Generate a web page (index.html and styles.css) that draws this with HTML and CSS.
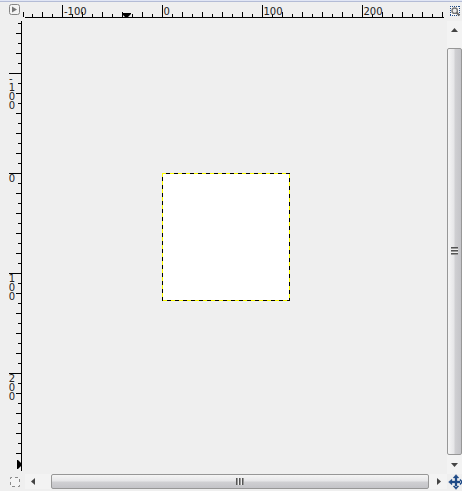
FILE: index.html
```
<!DOCTYPE html>
<html lang="en">
<head>
  <meta charset="UTF-8" />
  <title>Image window</title>
  <link rel="stylesheet" href="styles.css">
</head>
<body>
  <div class="window">
    <button class="corner menu-button" aria-label="Menu">
      <svg width="22" height="19" viewBox="0 2 22 19">
        <rect x="9.5" y="4.5" width="10" height="10" rx="2" fill="#f4f4f4" stroke="#858585"/>
        <path d="M12 6.5v6l5-3z" fill="#777"/>
      </svg>
    </button>

    <svg class="ruler-top" width="425" height="19" viewBox="22 2 425 19">
      <defs>
        <pattern id="ticks-x" patternUnits="userSpaceOnUse" x="62" y="0" width="100" height="20">
          <path d="M0 5h1v12H0zM10 14h1v3h-1zM20 12h1v5h-1zM30 14h1v3h-1zM40 12h1v5h-1zM50 14h1v3h-1zM60 12h1v5h-1zM70 14h1v3h-1zM80 12h1v5h-1zM90 14h1v3h-1z"/>
        </pattern>
      </defs>
      <rect x="25" y="0" width="419" height="17" fill="url(#ticks-x)"/>
      <path d="M23 12h1v5h-1zM25 17h419v1H25z"/>
      <text x="64" y="15">-100</text>
      <text x="163.5" y="15">0</text>
      <text x="263.5" y="15">100</text>
      <text x="363.5" y="15">200</text>
      <path d="M122 13h9v1l-4 4h-1l-4-4z"/>
    </svg>

    <div class="corner">
      <svg width="15" height="19" viewBox="447 2 15 19">
        <rect x="450.5" y="6.5" width="9" height="9" fill="#fafafa"/>
        <path d="M450 6.500h10M450 15.500h10M450.500 6v10M459.500 6v10" fill="none" stroke="#204a87" stroke-dasharray="1 1"/>
        <circle cx="454.7" cy="10.7" r="2.7" fill="#eee" stroke="#777" stroke-width="1.4"/>
        <path d="M456.5 12.5l3 3" stroke="#666" stroke-width="2"/>
      </svg>
    </div>

    <svg class="ruler-left" width="22" height="453" viewBox="0 21 22 453">
      <defs>
        <pattern id="ticks-y" patternUnits="userSpaceOnUse" x="0" y="73" width="22" height="100">
          <path d="M9 0h12v1H9zM18 10h3v1h-3zM16 20h5v1h-5zM18 30h3v1h-3zM16 40h5v1h-5zM18 50h3v1h-3zM16 60h5v1h-5zM18 70h3v1h-3zM16 80h5v1h-5zM18 90h3v1h-3z"/>
        </pattern>
      </defs>
      <rect x="0" y="21" width="21" height="450" fill="url(#ticks-y)"/>
      <path d="M21 21h1v450h-1z"/>
      <text x="9" y="82">-</text>
      <text x="8.8" y="91">1</text>
      <text x="8.8" y="100">0</text>
      <text x="8.8" y="109">0</text>
      <text x="8.8" y="182">0</text>
      <text x="8.8" y="282">1</text>
      <text x="8.8" y="291">0</text>
      <text x="8.8" y="300">0</text>
      <text x="8.8" y="382">2</text>
      <text x="8.8" y="391">0</text>
      <text x="8.8" y="400">0</text>
      <path d="M17 460h1l4 4v1l-4 4h-1z"/>
    </svg>

    <main class="canvas">
      <div class="layer"></div>
    </main>

    <div class="scrollbar vertical">
      <svg width="15" height="27" viewBox="0 0 15 27"><path d="M4 11l3.5-4L11 11z" fill="#444"/></svg>
      <div class="thumb"><span class="grip"></span></div>
      <svg width="15" height="18" viewBox="0 0 15 18"><path d="M4 8l3.5 4L11 8z" fill="#444"/></svg>
    </div>

    <div class="corner">
      <svg width="22" height="17" viewBox="0 474 22 17">
        <rect x="10.5" y="477.5" width="9" height="9" fill="#f4f4f4" stroke="#8a8a8a" stroke-dasharray="3 3" stroke-dashoffset="1.5"/>
      </svg>
    </div>

    <div class="scrollbar horizontal">
      <svg width="26" height="15" viewBox="0 0 26 15"><path d="M10 4L6 7.5l4 3.5z" fill="#444"/></svg>
      <div class="thumb"><span class="grip"></span></div>
      <svg width="17" height="15" viewBox="0 0 17 15"><path d="M8 4l4 3.5L8 11z" fill="#444"/></svg>
    </div>

    <div class="corner">
      <svg width="15" height="17" viewBox="447 474 15 17">
        <path d="M455 477h2v10h-2zM451 481h10v2h-10zM456 474.500l3 3.500h-6zM456 489.500l3-3.500h-6zM448.500 482l3.500-3v6zM463.500 482l-3.500-3v6z" fill="#204a87" stroke="#204a87" stroke-width=".3"/>
      </svg>
    </div>
  </div>
</body>
</html>
```
FILE: styles.css
```
body {
  margin: 0;
  background-color: #efefef;
  overflow: hidden;
}
svg {
  display: block;
}
text {
  font-family: "DejaVu Sans", sans-serif;
  font-size: 10px;
  fill: #222;
}
.window {
  box-sizing: border-box;
  width: 462px;
  height: 491px;
  display: grid;
  grid-template-columns: 22px 425px 15px;
  grid-template-rows: 19px 453px 17px;
  border-top: 1px solid #e1e6f5;
  box-shadow: inset 0 1px #b4bcd6;
  padding-top: 1px;
}
.menu-button {
  padding: 0;
  border: 0;
  background: none;
}
.canvas {
  display: flex;
  padding: 152px 0 0 140px;
}
/* marching selection outline, one dashed strip per edge */
.layer {
  width: 128px;
  height: 128px;
  background:
    repeating-linear-gradient(90deg, #ff0 0 4px, #000 4px 8px) 0 0 / 128px 1px no-repeat,
    repeating-linear-gradient(90deg, #000 0 1px, #ff0 1px 5px, #000 5px 8px) 0 127px / 128px 1px no-repeat,
    repeating-linear-gradient(180deg, #ff0 0 4px, #000 4px 8px) 0 0 / 1px 128px no-repeat,
    repeating-linear-gradient(180deg, #000 0 1px, #ff0 1px 5px, #000 5px 8px) 127px 0 / 1px 128px no-repeat,
    #fff;
}
.scrollbar {
  display: flex;
  background-color: #f3f3f3;
}
.vertical {
  flex-direction: column;
}
.horizontal {
  height: 15px;
  margin-left: 3px;
}
.thumb {
  box-sizing: border-box;
  display: flex;
  align-items: center;
  justify-content: center;
  border: 1px solid #979797;
  border-radius: 2px;
}
.vertical .thumb {
  height: 407px;
  background: linear-gradient(90deg, #f5f5f5, #e6e6e8 45%, #cfcfd2 55%, #c4c4c8);
}
.horizontal .thumb {
  width: 378px;
  background: linear-gradient(180deg, #f5f5f5, #e6e6e8 45%, #cfcfd2 55%, #c4c4c8);
}
.vertical .grip {
  width: 7px;
  height: 8px;
  margin-bottom: 2px;
  background: repeating-linear-gradient(180deg, #555 0 1px, #999 1px 2px, #eee 2px 3px);
}
.horizontal .grip {
  width: 8px;
  height: 7px;
  margin-bottom: 1px;
  background: repeating-linear-gradient(90deg, #555 0 1px, #999 1px 2px, #eee 2px 3px);
}
```
